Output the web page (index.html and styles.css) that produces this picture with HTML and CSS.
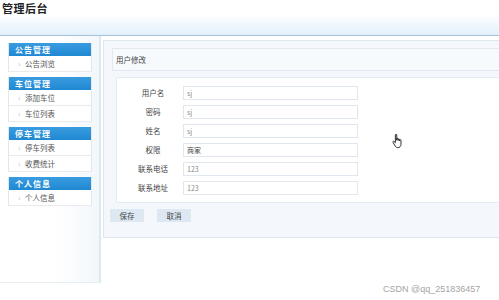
FILE: index.html
```html
<!DOCTYPE html>
<html lang="zh-CN">
  <head>
    <meta charset="utf-8" />
    <title>管理后台</title>
    <link rel="stylesheet" href="styles.css">
  </head>
  <body>
    <div class="header">
      <h1 class="title">管理后台</h1>
    </div>
    <div class="layout">
      <div class="sidebar">
        <div class="menu">
          <div class="group">
            <div class="group-title">公告管理</div>
            <div class="item">公告浏览</div>
          </div>
          <div class="group">
            <div class="group-title">车位管理</div>
            <div class="item">添加车位</div>
            <div class="item">车位列表</div>
          </div>
          <div class="group">
            <div class="group-title">停车管理</div>
            <div class="item">停车列表</div>
            <div class="item">收费统计</div>
          </div>
          <div class="group">
            <div class="group-title">个人信息</div>
            <div class="item">个人信息</div>
          </div>
        </div>
      </div>
      <div class="main">
        <div class="box">
          <div class="box-title">用户修改</div>
          <div class="form">
            <div class="row"><span class="label">用户名</span><span class="field">sj</span></div>
            <div class="row"><span class="label">密码</span><span class="field">sj</span></div>
            <div class="row"><span class="label">姓名</span><span class="field">sj</span></div>
            <div class="row"><span class="label">权限</span><span class="field dark">商家</span></div>
            <div class="row"><span class="label">联系电话</span><span class="field">123</span></div>
            <div class="row"><span class="label">联系地址</span><span class="field">123</span></div>
          </div>
          <div class="actions">
            <button type="button" class="btn">保存</button>
            <button type="button" class="btn">取消</button>
          </div>
        </div>
      </div>
    </div>
    <svg class="cursor" width="14" height="17" viewBox="0 0 16 18">
      <path d="M5 1.5c0-.9 1.6-.9 1.6 0V7.5V6c0-.9 1.6-.9 1.6 0v1.8V6.8c0-.9 1.6-.9 1.6 0v1.4V7.6c0-.9 1.6-.9 1.6 0v4.6c0 2.1-1.5 3.8-3.2 3.8H7.6c-1.2 0-2.1-.6-2.7-1.6L2.3 10.1c-.5-.9.5-1.7 1.3-1.1L5 10.4z" fill="#fff" stroke="#111" stroke-width="1"/>
    </svg>
    <div class="watermark">CSDN @qq_251836457</div>
  </body>
</html>
```
FILE: styles.css
```css
body {
  margin: 0;
  padding: 0;
  width: 499px;
  height: 300px;
  overflow: hidden;
  position: relative;
  background: #fff;
  font-family: "Noto Sans CJK SC", "Noto Sans", sans-serif;
  color: #333;
}

.header {
  height: 35px;
  border-bottom: 1px solid #a7c1d5;
  background: linear-gradient(to bottom, #fff 0, #fff 14px, #e2f0fb 35px);
}

.title {
  margin: 0;
  padding: 1px 0 0 2px;
  font-size: 11px;
  line-height: 14px;
  font-weight: bold;
  color: #222;
  letter-spacing: 0.5px;
}

.layout {
  display: flex;
  height: 247px;
}

.sidebar {
  width: 84px;
  padding: 7px 7px 0 8px;
  border-right: 2px solid #dde8f1;
  border-bottom: 1px solid #e6edf3;
  background: linear-gradient(to right, #fff 55%, #f2f7fc);
}

.group {
  margin-bottom: 5px;
  border-left: 1px solid #e4e7ea;
  border-right: 1px solid #e4e7ea;
  background: #fff;
}

.group-title {
  height: 13px;
  line-height: 13px;
  padding-left: 6px;
  background: linear-gradient(to bottom, #3a9ce0, #1f88d2);
  color: #fff;
  font-size: 8px;
  font-weight: bold;
  letter-spacing: 1px;
}

.item {
  height: 15px;
  line-height: 15px;
  border-bottom: 1px solid #e8ebee;
  padding-left: 16px;
  font-size: 7.5px;
  color: #555;
  position: relative;
}

.item::before {
  content: "›";
  position: absolute;
  left: 9px;
  top: 0;
  color: #b5bcc4;
  font-size: 8px;
}

.main {
  flex: 1;
  padding: 4px 0 0 2px;
  min-width: 0;
}

.box {
  border: 1px solid #dce7f0;
  border-right: none;
  background: #f4f8fd;
  padding: 7px 0 15px 0;
}

.box-title {
  margin-left: 8px;
  height: 21px;
  line-height: 21px;
  padding-left: 3px;
  border: 1px solid #e1e9f1;
  border-right: none;
  background: #f7fafd;
  font-size: 7.5px;
  color: #444;
}

.form {
  margin: 6px 0 0 12px;
  padding: 5px 0 5px 6px;
  border: 1px solid #e4ebf2;
  border-right: none;
  background: #fff;
}

.row {
  display: flex;
  align-items: center;
  height: 19px;
}

.label {
  width: 60px;
  text-align: center;
  font-size: 7.5px;
  color: #444;
}

.field {
  width: 170px;
  height: 12px;
  line-height: 12px;
  padding-left: 3px;
  border: 1px solid #e0e7ee;
  font-size: 7px;
  color: #8a8a8a;
  background: #fff;
}

.field.dark {
  color: #444;
}

.actions {
  display: flex;
  gap: 13px;
  margin: 6px 0 0 6px;
}

.btn {
  width: 34px;
  height: 13px;
  padding: 0;
  border: none;
  background: #dde8f3;
  font-family: "Noto Sans CJK SC", sans-serif;
  font-size: 7.5px;
  color: #444;
}

.cursor {
  position: absolute;
  left: 391px;
  top: 133px;
}

.watermark {
  position: absolute;
  left: 383px;
  top: 284px;
  font-family: "Liberation Sans", Arial, sans-serif;
  font-size: 9px;
  color: #a5a5a5;
}
```
